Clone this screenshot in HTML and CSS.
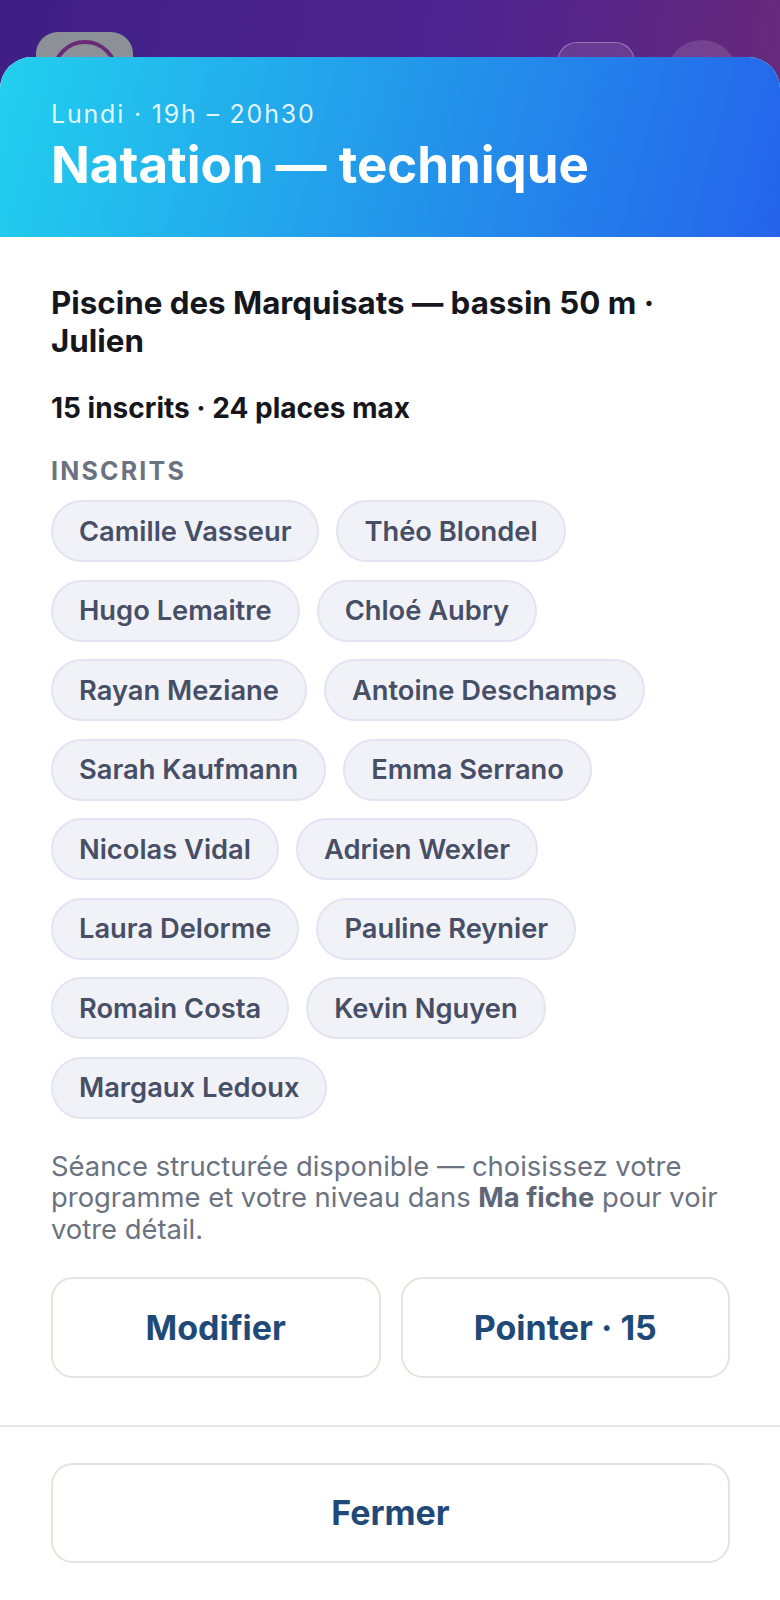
FILE: index.html
```html
<!DOCTYPE html>
<html lang="fr">
<head>
<meta charset="utf-8">
<link rel="stylesheet" href="styles.css">
</head>
<body>
<div class="backdrop">
  <div class="topbar">
    <div class="app-icon"><div class="ring"></div></div>
    <div class="top-actions">
      <div class="pill-btn"></div>
      <div class="avatar"></div>
    </div>
  </div>
  <div class="sheet">
    <header class="sheet-head">
      <div class="when">Lundi · 19h – 20h30</div>
      <h1 class="title">Natation — technique</h1>
    </header>
    <section class="sheet-body">
      <p class="place">Piscine des Marquisats — bassin 50 m · Julien</p>
      <p class="count">15 inscrits · 24 places max</p>
      <div class="label">INSCRITS</div>
      <div class="chips">
        <span class="chip">Camille Vasseur</span>
        <span class="chip">Théo Blondel</span>
        <span class="chip">Hugo Lemaitre</span>
        <span class="chip">Chloé Aubry</span>
        <span class="chip">Rayan Meziane</span>
        <span class="chip">Antoine Deschamps</span>
        <span class="chip">Sarah Kaufmann</span>
        <span class="chip">Emma Serrano</span>
        <span class="chip">Nicolas Vidal</span>
        <span class="chip">Adrien Wexler</span>
        <span class="chip">Laura Delorme</span>
        <span class="chip">Pauline Reynier</span>
        <span class="chip">Romain Costa</span>
        <span class="chip">Kevin Nguyen</span>
        <span class="chip">Margaux Ledoux</span>
      </div>
      <p class="note">Séance structurée disponible — choisissez votre programme et votre niveau dans <strong>Ma fiche</strong> pour voir votre détail.</p>
      <div class="actions">
        <button class="btn">Modifier</button>
        <button class="btn">Pointer · 15</button>
      </div>
    </section>
    <footer class="sheet-foot">
      <button class="btn btn-wide">Fermer</button>
    </footer>
  </div>
</div>
</body>
</html>
```
FILE: styles.css
```css
* { box-sizing: border-box; }
html, body { margin: 0; padding: 0; }
body {
  font-family: Inter, "Noto Sans", sans-serif;
  background: #fff;
}
.backdrop {
  background: linear-gradient(100deg, #3f1f84 0%, #4e248f 45%, #7b2d6a 100%);
  min-height: 1600px;
  display: flex;
  flex-direction: column;
}
.topbar {
  height: 57px;
  display: flex;
  justify-content: space-between;
  padding: 32px 42px 0 36px;
}
.app-icon {
  width: 97px;
  height: 80px;
  border-radius: 22px;
  background: #8c9197;
  display: flex;
  justify-content: center;
  padding-top: 8px;
}
.ring {
  width: 66px;
  height: 66px;
  border-radius: 50%;
  border: 4px solid #6a2a78;
}
.top-actions {
  display: flex;
  gap: 31px;
  padding-top: 10px;
}
.pill-btn {
  width: 78px;
  height: 60px;
  border-radius: 20px;
  border: 1.5px solid rgba(255,255,255,0.3);
  background: rgba(255,255,255,0.1);
}
.avatar {
  width: 72px;
  height: 72px;
  margin-top: -2px;
  border-radius: 50%;
  background: rgba(255,255,255,0.13);
}
.sheet {
  position: relative;
  flex: 1;
  background: #fff;
  border-radius: 32px 32px 0 0;
  overflow: hidden;
}
.sheet-head {
  background: linear-gradient(105deg, #22d0ee 0%, #2399ea 50%, #2563eb 100%);
  padding: 41px 50px 42px 51px;
  color: #fff;
}
.when {
  font-size: 25px;
  line-height: 32px;
  letter-spacing: 1.8px;
  color: rgba(255,255,255,0.88);
}
.title {
  margin: 5px 0 0;
  font-size: 51px;
  line-height: 60px;
  font-weight: 700;
}
.sheet-body {
  padding: 47px 50px 47px 51px;
}
.place {
  margin: 0;
  font-size: 31.3px;
  line-height: 38px;
  font-weight: 700;
  color: #15171c;
}
.count {
  margin: 30px 0 0;
  font-size: 28px;
  line-height: 36px;
  font-weight: 700;
  color: #15171c;
}
.label {
  margin-top: 30px;
  font-size: 25px;
  line-height: 30px;
  font-weight: 700;
  letter-spacing: 2.2px;
  color: #6b7280;
}
.chips {
  margin-top: 14px;
  display: flex;
  flex-wrap: wrap;
  gap: 17.5px 17px;
}
.chip {
  height: 62px;
  display: inline-flex;
  align-items: center;
  padding: 0 26px;
  border-radius: 31px;
  background: #f1f2f8;
  border: 2px solid #e2e4f3;
  font-size: 27.3px;
  font-weight: 600;
  color: #474f66;
}
.note {
  margin: 32px 0 0;
  font-size: 27.4px;
  line-height: 31.5px;
  color: #6b7280;
}
.note strong {
  font-weight: 700;
  color: #5f6676;
}
.actions {
  margin-top: 31.5px;
  display: grid;
  grid-template-columns: 1fr 1fr;
  gap: 20px;
}
.btn {
  height: 101px;
  border-radius: 22px;
  border: 2px solid #e4e4df;
  background: #fff;
  font-family: Inter, "Noto Sans", sans-serif;
  font-size: 34px;
  font-weight: 700;
  color: #1f4a78;
}
.sheet-foot {
  border-top: 2px solid #e8e8e5;
  padding: 36px 50px 0 51px;
}
.btn-wide {
  width: 100%;
  height: 100px;
}
```
